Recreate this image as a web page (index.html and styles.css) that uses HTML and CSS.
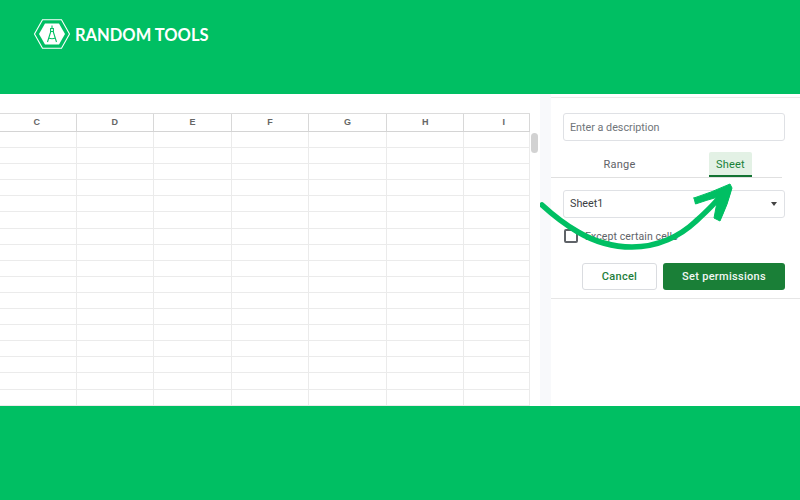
FILE: index.html
```html
<!DOCTYPE html>
<html lang="en">
<head>
<meta charset="utf-8">
<title>Random Tools</title>
<link rel="stylesheet" href="styles.css">
</head>
<body>
<header class="banner">
  <div class="brand">
    <svg class="logo" viewBox="0 0 36 30" width="36" height="30" fill="none" stroke="#fff">
      <path d="M8.500.7h19l8 14.300-8 14.300h-19L.5 15z" stroke-width="1.100"/>
      <path d="M11 4.500h14l6 10.500-6 10.500H11L5 15z" fill="#fff" stroke="none"/>
      <path d="M18 6.500v3M16.600 9.500h2.800v3h-2.800zM16.800 12.500L13.500 23M19.200 12.500L22.500 23M14.500 19q3.500 1.500 7 0" stroke="#00bf63" stroke-width="1.100"/>
    </svg>
    <span class="brand-name">RANDOM TOOLS</span>
  </div>
</header>

<main class="shot">
  <section class="sheet">
    <div class="columns">
      <div class="col">C</div><div class="col">D</div><div class="col">E</div><div class="col">F</div><div class="col">G</div><div class="col">H</div><div class="col">I</div>
    </div>
    <div class="grid-wrap">
      <div class="grid" id="grid"></div>
      <div class="scroll"><div class="thumb"></div></div>
    </div>
  </section>
  <div class="gutter"></div>
  <aside class="panel">
    <div class="panel-body">
      <div class="field placeholder">Enter a description</div>
      <div class="tabs">
        <div class="tab">Range</div>
        <div class="tab active">Sheet</div>
      </div>
      <div class="field select"><span>Sheet1</span><span class="caret"></span></div>
      <label class="check"><span class="box"></span><span>Except certain cells</span></label>
      <div class="actions">
        <button class="btn cancel">Cancel</button>
        <button class="btn primary">Set permissions</button>
      </div>
    </div>
  </aside>
  <svg class="arrow" viewBox="0 0 200 70" width="200" height="70" fill="none" stroke="#00bf63" stroke-linecap="round" stroke-linejoin="round">
    <path d="M2 23C14 34 26 43 38 50C55 60 74 65 92 65C118 65 140 54 155 40C166 30 175 22 182 12" stroke-width="5.500"/>
    <path d="M154 16L155.500 22Q167 18 178 15L174 36L180 39Q188 22 192 6L190 2Q170 11 154 16Z" fill="#00bf63" stroke-width="1"/>
  </svg>
</main>

<footer class="banner-foot"></footer>
<script src="grid.js"></script>
</body>
</html>
```

FILE: grid.js
```js
var grid = document.getElementById('grid');
for (var i = 0; i < 7 * 17; i++) {
  var cell = document.createElement('div');
  cell.className = 'cell';
  grid.appendChild(cell);
}
```

FILE: styles.css
```css
* { box-sizing: border-box; }
html, body { margin: 0; height: 100%; }
body {
  width: 800px;
  height: 500px;
  overflow: hidden;
  display: flex;
  flex-direction: column;
  background: #00bf63;
  font-family: Roboto, "Liberation Sans", sans-serif;
}
.banner { height: 94px; padding: 19px 0 0 34px; flex: none; }
.brand { display: flex; align-items: center; gap: 5px; }
.logo { display: block; }
.brand-name {
  padding-top: 2px;
  font-family: Lato, "Liberation Sans", sans-serif;
  font-weight: 700;
  font-size: 16.500px;
  color: #fff;
}
.shot {
  position: relative;
  height: 312px;
  flex: none;
  display: flex;
  background: #fff;
  overflow: hidden;
}
.sheet { width: 540px; padding-top: 19px; flex: none; }
.columns {
  display: grid;
  grid-template-columns: 76.500px repeat(5, 77.600px) 65.500px;
  height: 19px;
  border-top: 1px solid #dcdcdc;
  border-bottom: 1px solid #d4d4d4;
  width: 530px;
}
.col {
  border-right: 1px solid #d8d8d8;
  font: 700 9px/17px "Liberation Sans", sans-serif;
  color: #666;
  text-align: center;
}
.col:first-child { padding-right: 2px; }
.col:last-child { text-align: left; padding-left: 38px; }
.grid-wrap { display: flex; }
.grid {
  width: 530px;
  display: grid;
  grid-template-columns: 76.500px repeat(5, 77.600px) 65.500px;
  grid-auto-rows: 16.100px;
  align-content: start;
}
.cell { border-right: 1px solid #ebebeb; border-bottom: 1px solid #ebebeb; }
.scroll { width: 10px; }
.thumb { width: 7px; height: 20px; margin: 1px 0 0 1px; background: #d2d2d2; border-radius: 4px; }
.gutter { width: 11px; flex: none; background: #f8f9fb; }
.panel { flex: 1; margin-top: 3px; padding-top: 15px; border-top: 1px solid #eaeaea; }
.panel-body { padding: 0 15px 8px 12px; border-bottom: 1px solid #e6e6e6; }
.field {
  height: 28px;
  border: 1px solid #dfe1e5;
  border-radius: 3px;
  padding: 0 6px;
  font-size: 10.750px;
  line-height: 26px;
  color: #3c4043;
  background: #fff;
}
.placeholder { color: #70757a; line-height: 27px; }
.tabs {
  display: flex;
  margin: 11px 3px 0 -12px;
  height: 26px;
  border-bottom: 1px solid #e0e0e0;
  padding-left: 47px;
  gap: 68px;
}
.tab {
  width: 43px;
  height: 25px;
  font-size: 11px;
  line-height: 25px;
  text-align: center;
  color: #5f6368;
  letter-spacing: .2px;
}
.tab.active {
  background: #e3f1e5;
  color: #188038;
  border-bottom: 2px solid #137333;
  border-radius: 2px 2px 0 0;
}
.select {
  display: flex;
  justify-content: space-between;
  align-items: center;
  margin-top: 12px;
}
.caret {
  width: 0;
  height: 0;
  border: 3.500px solid transparent;
  border-top: 4px solid #444;
  border-bottom: 0;
  margin-right: 1px;
}
.check {
  display: flex;
  align-items: center;
  gap: 7px;
  margin: 10px 0 0 1px;
  font-size: 10.500px;
  color: #5f6368;
  height: 16px;
  letter-spacing: .1px;
}
.box { width: 14px; height: 14px; border: 2px solid #5f6368; border-radius: 2px; background: #fff; }
.actions { display: flex; justify-content: flex-end; gap: 6px; margin-top: 19px; }
.btn {
  height: 27px;
  border-radius: 3px;
  font: 500 11px Roboto, sans-serif;
  letter-spacing: .3px;
}
.cancel { width: 75px; background: #fff; border: 1px solid #dadce0; color: #1e7e3c; }
.primary { width: 122px; background: #1a7f37; border: 0; color: #f2f7f3; }
.arrow { position: absolute; left: 540px; top: 88px; }
.banner-foot { flex: 1; }
```
